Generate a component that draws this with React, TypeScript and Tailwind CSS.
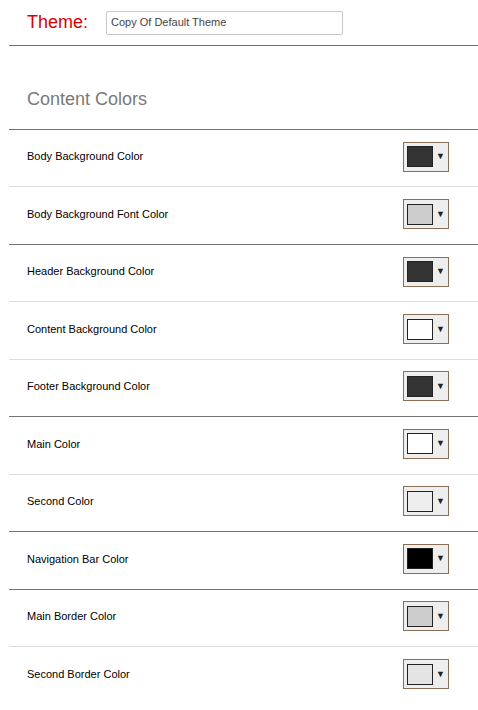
import React from 'react';

type Row = { label: string; color: string; dark?: boolean };

const rows: Row[] = [
  { label: 'Body Background Color', color: '#333333' },
  { label: 'Body Background Font Color', color: '#cccccc', dark: true },
  { label: 'Header Background Color', color: '#333333' },
  { label: 'Content Background Color', color: '#ffffff' },
  { label: 'Footer Background Color', color: '#333333', dark: true },
  { label: 'Main Color', color: '#ffffff' },
  { label: 'Second Color', color: '#eeeeee', dark: true },
  { label: 'Navigation Bar Color', color: '#000000', dark: true },
  { label: 'Main Border Color', color: '#cccccc' },
  { label: 'Second Border Color', color: '#e4e4e4' },
];

const ColorPicker: React.FC<{ color: string }> = ({ color }) => (
  <div className="flex items-center w-[46px] h-[30px] border border-[#8a6e55] bg-[#eeeeee] pl-[3px]">
    <div className="w-[26px] h-[21px] border border-[#222]" style={{ backgroundColor: color }} />
    <span className="ml-[3px] text-[9px] leading-none text-[#222]">▼</span>
  </div>
);

const App: React.FC = () => {
  return (
    <div className="w-[478px] min-h-[710px] bg-white font-['Liberation_Sans',Arial,sans-serif]">
      {/* Theme header */}
      <div className="ml-[9px] border-b border-[#4d7b96]">
        <div className="flex items-center h-[45px] pl-[18px]">
          <span className="text-[18px] text-[#dd0000] w-[79px]">Theme:</span>
          <div className="w-[237px] h-[24px] border border-[#c8c8c8] rounded-[2px] flex items-center px-[4px] text-[11px] text-[#444]">
            Copy Of Default Theme
          </div>
        </div>
      </div>

      {/* Content Colors */}
      <div className="ml-[9px]">
        <div className="h-[84px] pl-[18px] pt-[42px] border-b border-[#4d7b96]">
          <h2 className="text-[18px] leading-[22px] text-[#7a7a7a]">Content Colors</h2>
        </div>
        {rows.map((r, i) => (
          <div
            key={i}
            className={`flex items-center justify-between h-[57.45px] pl-[18px] pr-[29px] pb-[3px] ${
              i === rows.length - 1 ? '' : r.dark ? 'border-b border-[#747474]' : 'border-b border-[#dddddd]'
            }`}
          >
            <span className="text-[11px] text-black">{r.label}</span>
            <ColorPicker color={r.color} />
          </div>
        ))}
      </div>
    </div>
  );
};

export default App;
